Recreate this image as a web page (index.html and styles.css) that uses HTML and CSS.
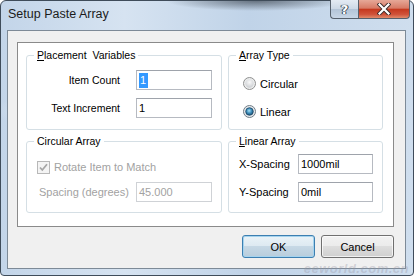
FILE: index.html
```html
<!DOCTYPE html>
<html>
<head>
<meta charset="utf-8">
<title>Setup Paste Array</title>
<link rel="stylesheet" href="styles.css">
</head>
<body>
<div class="window">
  <div class="titlebar">
    <span class="title">Setup Paste Array</span>
    <div class="caps">
      <div class="cap help"><span>?</span></div>
      <div class="cap close">
        <svg width="14" height="12" viewBox="0 0 14 12"><path d="M2.5 1.5 L11.5 10.5 M11.5 1.5 L2.5 10.5" stroke="#3a2a28" stroke-width="4" stroke-linecap="square"/><path d="M2.5 1.5 L11.5 10.5 M11.5 1.5 L2.5 10.5" stroke="#fff" stroke-width="2.2" stroke-linecap="square"/></svg>
      </div>
    </div>
  </div>
  <div class="client">
    <div class="panel">
      <div class="grid">
        <div class="group place">
          <span class="legend"><u>P</u>lacement&nbsp; Variables</span>
          <div class="frow">
            <span class="rlabel">Item Count</span>
            <div class="input"><span class="sel">1</span></div>
          </div>
          <div class="frow">
            <span class="rlabel">Text Increment</span>
            <div class="input">1</div>
          </div>
        </div>
        <div class="group atype">
          <span class="legend"><u>A</u>rray Type</span>
          <div class="radio">
            <svg width="13" height="13" viewBox="0 0 13 13">
              <defs>
                <radialGradient id="rg0" cx="0.5" cy="0.35" r="0.7"><stop offset="0" stop-color="#fafafa"/><stop offset="1" stop-color="#c8cbcf"/></radialGradient>
              </defs>
              <circle cx="6.5" cy="6.5" r="6" fill="#eceded" stroke="#8f9090"/>
              <circle cx="6.5" cy="6.5" r="4.2" fill="url(#rg0)"/>
            </svg>
            <span>Circular</span>
          </div>
          <div class="radio">
            <svg width="13" height="13" viewBox="0 0 13 13">
              <defs>
                <radialGradient id="rg1" cx="0.45" cy="0.4" r="0.6"><stop offset="0" stop-color="#a9e2f7"/><stop offset="0.55" stop-color="#3b8bb8"/><stop offset="1" stop-color="#1c4f72"/></radialGradient>
              </defs>
              <circle cx="6.5" cy="6.5" r="6" fill="#e8eaec" stroke="#6f7c86"/>
              <circle cx="6.5" cy="6.5" r="3.8" fill="url(#rg1)" stroke="#1a4868" stroke-width="0.8"/>
            </svg>
            <span>Linear</span>
          </div>
        </div>
        <div class="group circ">
          <span class="legend">Circular Array</span>
          <div class="check">
            <svg width="13" height="13" viewBox="0 0 13 13">
              <rect x="0.5" y="0.5" width="12" height="12" fill="#f4f4f4" stroke="#b8b8b8"/>
              <path d="M3 6.5 L5.3 9 L10 3.3" fill="none" stroke="#a6a6a6" stroke-width="1.8"/>
            </svg>
            <span>Rotate Item to Match</span>
          </div>
          <div class="frow sp">
            <span class="llabel">Spacing (degrees)</span>
            <div class="input disabled">45.000</div>
          </div>
        </div>
        <div class="group lin">
          <span class="legend"><u>L</u>inear Array</span>
          <div class="frow">
            <span class="xlabel">X-Spacing</span>
            <div class="input">1000mil</div>
          </div>
          <div class="frow">
            <span class="xlabel">Y-Spacing</span>
            <div class="input">0mil</div>
          </div>
        </div>
      </div>
    </div>
    <div class="buttons">
      <div class="btn default">OK</div>
      <div class="btn">Cancel</div>
    </div>
    <div class="watermark">eeworld.com.cn</div>
  </div>
</div>
</body>
</html>
```
FILE: styles.css
```css
html, body {
  margin: 0;
  padding: 0;
  width: 414px;
  height: 276px;
  overflow: hidden;
  background: #fff;
}
.window {
  box-sizing: border-box;
  width: 414px;
  height: 276px;
  padding: 0 7px 6px 6px;
  display: flex;
  flex-direction: column;
  border: 1px solid #3f4c5a;
  border-radius: 6px 6px 4px 4px;
  background:
    radial-gradient(ellipse 90px 10px at 62% 0, rgba(30,36,44,0.55), rgba(30,36,44,0) 100%),
    radial-gradient(ellipse 80px 20px at 18% 40%, rgba(255,255,255,0.55), rgba(255,255,255,0) 100%),
    linear-gradient(90deg, #c3d5e9 0%, #d6e3f1 30%, #c0d3e8 60%, #cfdeee 100%);
  font-family: "Liberation Sans", Arial, sans-serif;
  font-size: 10.5px;
  color: #000;
  position: relative;
}
.titlebar {
  height: 29px;
  display: flex;
  align-items: flex-start;
  flex-shrink: 0;
}
.title {
  padding-left: 1px;
  margin-top: 6px;
  font-size: 12.5px;
  color: #1b1b1b;
}
.caps {
  margin-left: auto;
  margin-right: -4px;
  margin-top: -1px;
  display: flex;
}
.cap {
  height: 19px;
  box-sizing: border-box;
  border: 1px solid #56606c;
  border-top: none;
  display: flex;
  align-items: center;
  justify-content: center;
}
.help {
  width: 28px;
  border-radius: 0 0 0 4px;
  border-right: none;
  background: linear-gradient(180deg, #e4ebf3 0%, #ccd8e6 50%, #b3c4d7 51%, #c8d6e6 100%);
}
.help span {
  font-family: "DejaVu Sans", sans-serif;
  font-weight: bold;
  font-size: 13px;
  color: #fff;
  text-shadow: 0 0 1px #3a4654, 0 0 1px #3a4654, 1px 0 0 #3a4654, -1px 0 0 #3a4654;
}
.close {
  width: 52px;
  border-radius: 0 0 4px 0;
  background: linear-gradient(180deg, #e6a898 0%, #d77b66 45%, #c5391f 52%, #d0533a 80%, #e08b6b 100%);
}
.client {
  flex: 1;
  background: #f0f0f0;
  border: 1px solid #7d8a97;
  display: flex;
  flex-direction: column;
  position: relative;
}
.panel {
  margin: 11px 0 0 9px;
  width: 377px;
  height: 185px;
  box-sizing: border-box;
  border: 1px solid #8a8a8a;
  background: #fff;
  padding: 12px 0 0 8px;
}
.grid {
  display: grid;
  grid-template-columns: 196px 155px;
  grid-template-rows: 75px 72px;
  column-gap: 6px;
  row-gap: 11px;
}
.group {
  position: relative;
  border: 1px solid #d5dfe5;
  border-radius: 3px;
  box-sizing: border-box;
}
.legend {
  position: absolute;
  top: -7px;
  left: 7px;
  padding: 0 3px;
  background: #fff;
  line-height: 13px;
  white-space: nowrap;
}
.legend u {
  text-decoration: underline;
}
.frow {
  display: flex;
  align-items: center;
  height: 20px;
}
.place {
  padding-top: 14px;
}
.place .frow + .frow {
  margin-top: 8px;
}
.rlabel {
  width: 93px;
  text-align: right;
  margin-right: 16px;
}
.input {
  box-sizing: border-box;
  width: 76px;
  height: 20px;
  border: 1px solid #b6bac1;
  border-top-color: #9ea3ab;
  background: #fff;
  padding: 0 2px;
  display: flex;
  align-items: center;
  font-size: 11px;
}
.sel {
  background: #3399ff;
  color: #fff;
  padding: 0 2px 0 1px;
  line-height: 15px;
}
.atype {
  padding: 21px 0 0 14px;
}
.radio {
  display: flex;
  align-items: center;
  height: 13px;
}
.radio + .radio {
  margin-top: 15px;
}
.radio svg {
  display: block;
  margin-right: 4px;
}
.radio span {
  font-size: 11px;
}
.circ {
  padding: 15px 0 0 10px;
  color: #a2a2a2;
}
.circ .legend {
  color: #000;
}
.check {
  display: flex;
  align-items: center;
  height: 20px;
  font-size: 11px;
}
.check svg {
  display: block;
  margin-right: 4px;
}
.sp {
  margin-top: 5px;
  margin-left: 2px;
}
.llabel {
  width: 97px;
  font-size: 11px;
}
.input.disabled {
  border-color: #cfd2d6;
  color: #a2a2a2;
}
.lin {
  padding: 12px 0 0 10px;
}
.lin .frow + .frow {
  margin-top: 8px;
}
.xlabel {
  width: 59px;
  font-size: 11px;
}
.lin .input {
  width: 75px;
}
.buttons {
  display: flex;
  justify-content: flex-end;
  gap: 6px;
  margin: 8px 11px 0 0;
}
.btn {
  box-sizing: border-box;
  width: 73px;
  height: 23px;
  border: 1px solid #707070;
  border-radius: 3px;
  background: linear-gradient(180deg, #f2f2f2 0%, #ebebeb 49%, #dddddd 50%, #cfcfcf 100%);
  display: flex;
  align-items: center;
  justify-content: center;
  font-size: 11px;
  box-shadow: inset 0 0 0 1px rgba(255,255,255,0.7);
}
.btn.default {
  border-color: #3c7fb1;
  background: linear-gradient(180deg, #eaf3f8 0%, #dde9f1 49%, #c6d8e5 50%, #b8cddc 100%);
  box-shadow: inset 0 0 0 1px #a5d3ee;
}
.watermark {
  position: absolute;
  right: -4px;
  bottom: -8px;
  font-family: "Liberation Sans", Arial, sans-serif;
  font-weight: bold;
  font-style: italic;
  font-size: 13px;
  color: rgba(150, 150, 165, 0.35);
  letter-spacing: 0.5px;
}
```
